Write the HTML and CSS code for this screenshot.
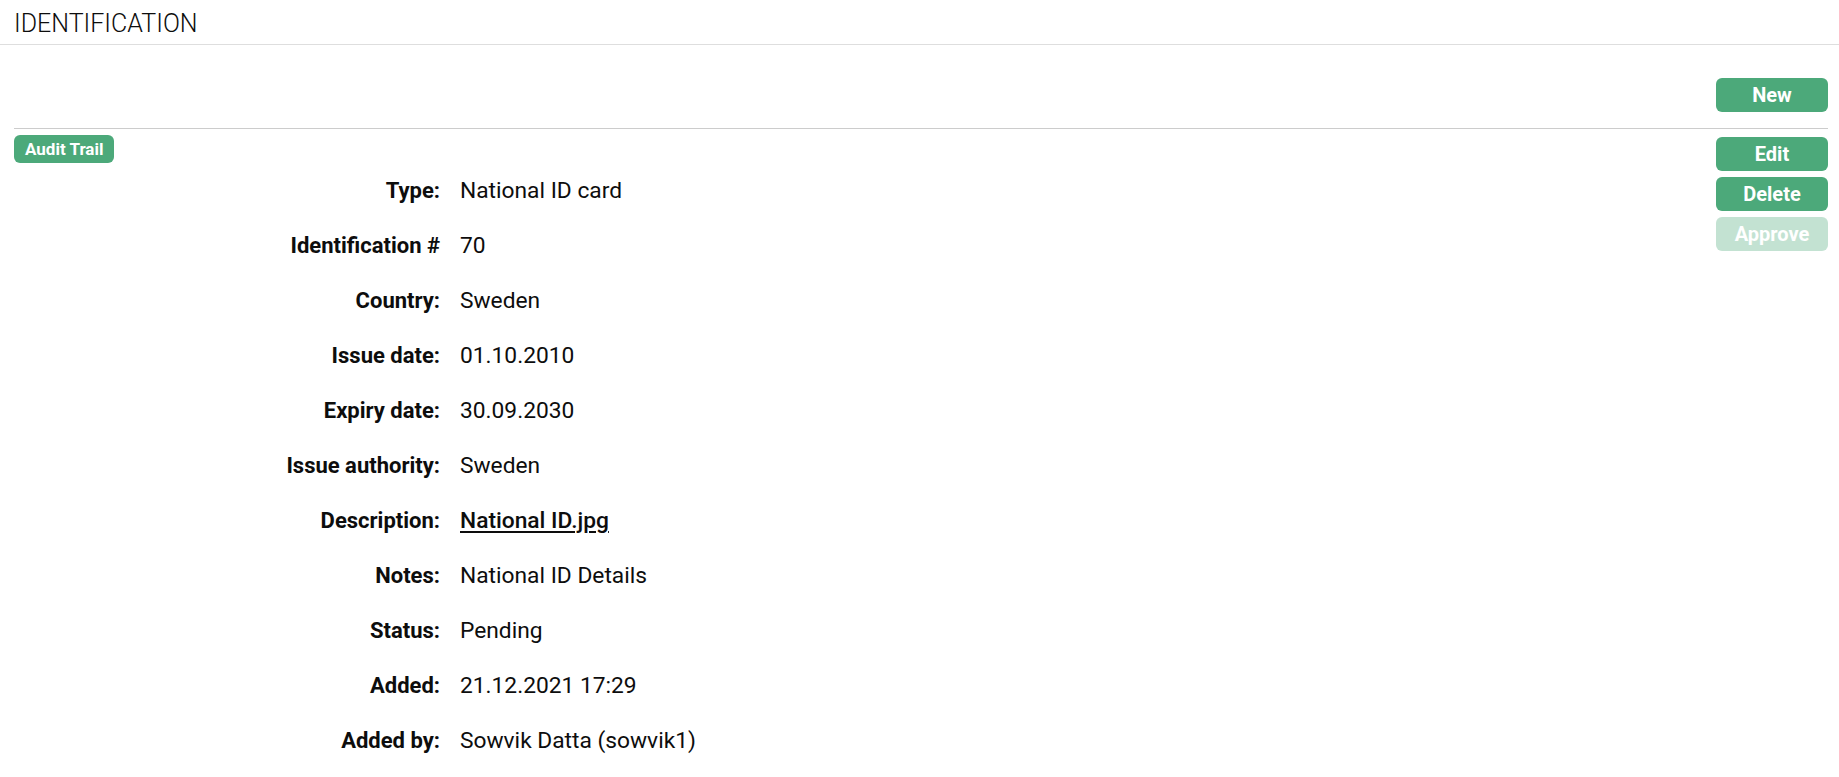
FILE: index.html
```html
<!DOCTYPE html>
<html lang="en">
<head>
<meta charset="utf-8">
<title>Identification</title>
<link rel="stylesheet" href="styles.css">
</head>
<body>
<header class="page-header">
  <h1 class="page-title">IDENTIFICATION</h1>
</header>
<main class="content">
  <div class="toolbar">
    <button class="btn" type="button">New</button>
  </div>
  <section class="record">
    <div class="record-main">
      <span class="badge">Audit Trail</span>
      <dl class="details">
        <dt>Type:</dt><dd>National ID card</dd>
        <dt>Identification #</dt><dd>70</dd>
        <dt>Country:</dt><dd>Sweden</dd>
        <dt>Issue date:</dt><dd>01.10.2010</dd>
        <dt>Expiry date:</dt><dd>30.09.2030</dd>
        <dt>Issue authority:</dt><dd>Sweden</dd>
        <dt>Description:</dt><dd><a class="file-link" href="#">National ID.jpg</a></dd>
        <dt>Notes:</dt><dd>National ID Details</dd>
        <dt>Status:</dt><dd>Pending</dd>
        <dt>Added:</dt><dd>21.12.2021 17:29</dd>
        <dt>Added by:</dt><dd>Sowvik Datta (sowvik1)</dd>
      </dl>
    </div>
    <div class="actions">
      <button class="btn" type="button">Edit</button>
      <button class="btn" type="button">Delete</button>
      <button class="btn btn-disabled" type="button" disabled>Approve</button>
    </div>
  </section>
</main>
</body>
</html>
```
FILE: styles.css
```css
html, body {
  margin: 0;
  padding: 0;
  background: #ffffff;
}

body {
  font-family: Roboto, "Liberation Sans", Arial, sans-serif;
  color: #0d0d0d;
  overflow: hidden;
}

.page-header {
  height: 45px;
  border-bottom: 1px solid #dedede;
  padding: 0 14px;
  box-sizing: border-box;
}

.page-title {
  margin: 0;
  padding-top: 4px;
  font-size: 25px;
  font-weight: 300;
  line-height: 40px;
  color: #0d0d0d;
}

.content {
  padding: 0 11px 0 14px;
}

.toolbar {
  display: flex;
  justify-content: flex-end;
  padding: 33px 0 16px;
  border-bottom: 1px solid #cccccc;
}

.btn {
  display: block;
  width: 112px;
  height: 34px;
  padding: 0;
  border: none;
  border-radius: 6px;
  background: #4ca97a;
  color: #ffffff;
  font-family: Roboto, "Liberation Sans", Arial, sans-serif;
  font-size: 20px;
  font-weight: 700;
  line-height: 34px;
  text-align: center;
  cursor: pointer;
}

.btn-disabled {
  opacity: 0.33;
  cursor: default;
}

.record {
  display: flex;
  align-items: flex-start;
  padding-top: 6px;
}

.record-main {
  flex: 1;
}

.badge {
  display: inline-block;
  height: 28px;
  padding: 0 11px;
  border-radius: 6px;
  background: #4ca97a;
  color: #ffffff;
  font-size: 17px;
  font-weight: 700;
  line-height: 28px;
}

.details {
  display: grid;
  grid-template-columns: 426px 1fr;
  column-gap: 20px;
  margin: 0;
  font-size: 22px;
  line-height: 55px;
}

.details dt {
  margin: 0;
  font-weight: 700;
  text-align: right;
  white-space: nowrap;
}

.details dd {
  margin: 0;
  font-size: 22.75px;
  font-weight: 400;
  white-space: nowrap;
}

.file-link {
  color: #0d0d0d;
  font-weight: 500;
  text-decoration: underline;
  text-underline-offset: 3px;
  text-decoration-thickness: 2px;
}

.actions {
  display: flex;
  flex-direction: column;
  gap: 6px;
  margin-top: 2px;
}
```
